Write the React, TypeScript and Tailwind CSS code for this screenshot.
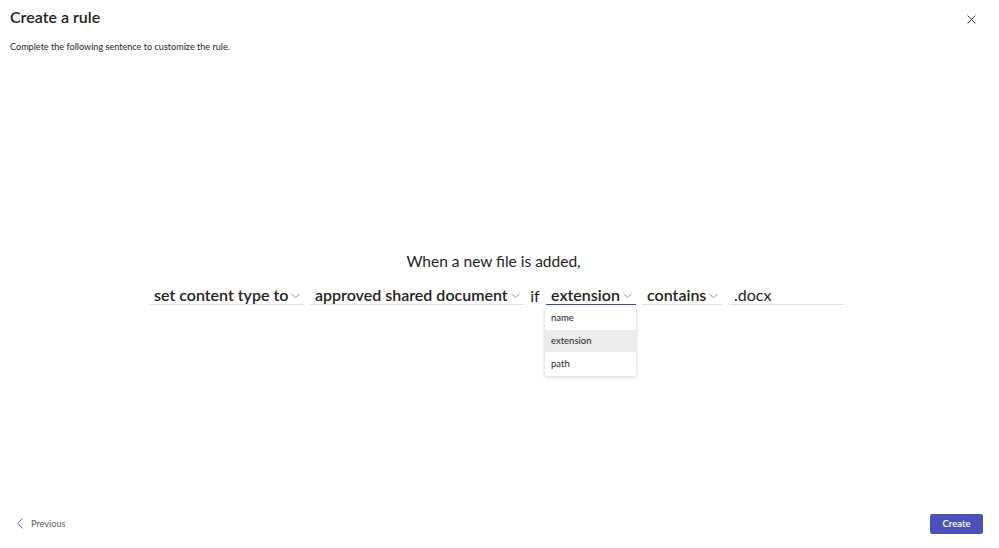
import React from "react";

const font = { fontFamily: 'Lato, "Noto Sans", sans-serif' };

function Chevron({ className = "" }: { className?: string }) {
  return (
    <svg width="9" height="6" viewBox="0 0 9 6" className={`shrink-0 ${className}`}>
      <path d="M0.5 0.8 L4.5 4.8 L8.5 0.8" fill="none" stroke="#8a8886" strokeWidth="0.9" />
    </svg>
  );
}

function Drop({ label, w, active = false }: { label: string; w: string; active?: boolean }) {
  return (
    <div
      className={`${w} flex items-end justify-between h-[24px] pl-[5px] pr-[4px] border-b ${
        active ? "border-[#444791]" : "border-[#e1dfdd]"
      }`}
    >
      <span className="text-[16px] font-semibold text-[#252423] leading-[18px] whitespace-nowrap">{label}</span>
      <Chevron className="mb-[5px]" />
    </div>
  );
}

export default function App() {
  return (
    <div className="w-[999px] h-[548px] bg-white flex flex-col text-[#252423]" style={font}>
      <div className="flex justify-between pl-[10px] pr-[23px] pt-[7px]">
        <div>
          <h1 className="text-[16px] font-semibold leading-[20px]">Create a rule</h1>
          <p className="text-[9.1px] text-[#252423] mt-[14px] leading-[12px]">
            Complete the following sentence to customize the rule.
          </p>
        </div>
        <svg width="9" height="9" viewBox="0 0 9 9" className="mt-[8px]">
          <path d="M0.5 0.5 L8.5 8.5 M8.5 0.5 L0.5 8.5" stroke="#484644" strokeWidth="1" />
        </svg>
      </div>

      <div className="flex-1 flex flex-col items-center pt-[198px]">
        <div className="text-[15.5px] leading-[20px] text-[#252423] pr-[12px]">When a new file is added,</div>
        <div className="flex items-end mt-[10px] pr-[6px]">
          <Drop label="set content type to" w="w-[155px]" />
          <div className="w-[6px]" />
          <Drop label="approved shared document" w="w-[214px]" />
          <span className="text-[16px] leading-[18px] w-[22px] text-center text-[#252423]">if</span>
          <div className="relative">
            <Drop label="extension" w="w-[90px]" active />
            <div className="absolute left-[-1px] top-[26px] w-[91px] bg-white shadow-[0_1px_4px_rgba(0,0,0,0.2)] rounded-[2px] text-[9.5px] text-[#252423] z-10">
              <div className="h-[23px] flex items-center pl-[6px]">name</div>
              <div className="h-[22px] flex items-center pl-[6px] bg-[#ebebeb]">extension</div>
              <div className="h-[24px] flex items-center pl-[6px]">path</div>
            </div>
          </div>
          <div className="w-[6px]" />
          <Drop label="contains" w="w-[80px]" />
          <div className="w-[7px]" />
          <div className="w-[115px] h-[24px] flex items-end pl-[5px] border-b border-[#e1dfdd]">
            <span className="text-[16px] leading-[18px] text-[#252423]">.docx</span>
          </div>
        </div>
      </div>

      <div className="flex justify-between items-center pl-[17px] pr-[16px] pb-[14px]">
        <div className="flex items-center gap-[8px]">
          <svg width="6" height="11" viewBox="0 0 6 11">
            <path d="M5.5 0.5 L0.8 5.5 L5.5 10.5" fill="none" stroke="#6264a7" strokeWidth="1" />
          </svg>
          <span className="text-[9.2px] text-[#605e5c]">Previous</span>
        </div>
        <button className="w-[53px] h-[20px] bg-[#4a52b9] text-white text-[9.5px] font-semibold rounded-[2px]">
          Create
        </button>
      </div>
    </div>
  );
}
